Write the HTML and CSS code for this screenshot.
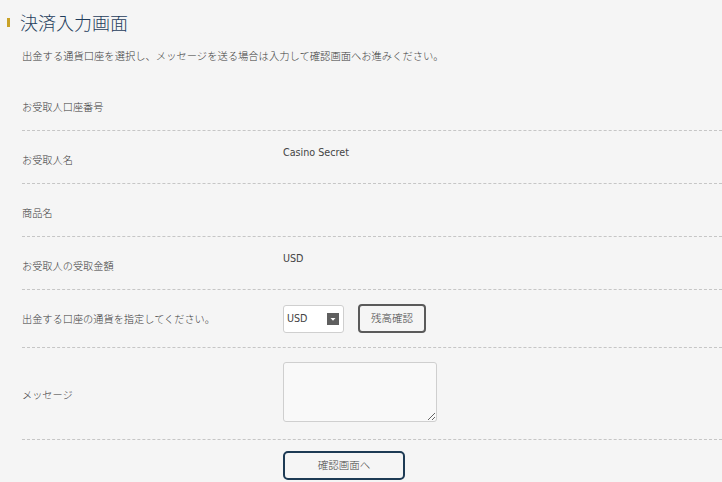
FILE: index.html
```html
<!DOCTYPE html>
<html lang="ja">
<head>
<meta charset="utf-8">
<title>決済入力画面</title>
<link rel="stylesheet" href="styles.css">
</head>
<body>
<div class="page">
  <div class="title">
    <span class="title-bar"></span>
    <h1 class="title-text">決済入力画面</h1>
  </div>
  <p class="desc">出金する通貨口座を選択し、メッセージを送る場合は入力して確認画面へお進みください。</p>
  <div class="form">
    <div class="row row-text">
      <div class="label">お受取人口座番号</div>
      <div class="value"></div>
    </div>
    <div class="row row-text">
      <div class="label">お受取人名</div>
      <div class="value latin">Casino Secret</div>
    </div>
    <div class="row row-text">
      <div class="label">商品名</div>
      <div class="value"></div>
    </div>
    <div class="row row-text">
      <div class="label">お受取人の受取金額</div>
      <div class="value latin">USD</div>
    </div>
    <div class="row row-control row-select">
      <div class="label">出金する口座の通貨を指定してください。</div>
      <div class="controls">
        <div class="select">
          <span class="select-text latin">USD</span>
          <span class="select-arrow"><svg width="12" height="12" viewBox="0 0 12 12"><rect width="12" height="12" fill="#5f5f5f"/><path d="M3.5 5 L8.5 5 L6 7.8 Z" fill="#fff"/></svg></span>
        </div>
        <button class="btn btn-gray" type="button">残高確認</button>
      </div>
    </div>
    <div class="row row-control row-message">
      <div class="label">メッセージ</div>
      <div class="controls">
        <textarea class="textarea"></textarea>
      </div>
    </div>
    <div class="submit-row">
      <button class="btn btn-navy" type="button">確認画面へ</button>
    </div>
  </div>
</div>
</body>
</html>
```

FILE: styles.css
```css
html, body {
  margin: 0;
  padding: 0;
  background: #f5f5f5;
}

body {
  font-family: "Noto Sans CJK JP", sans-serif;
  font-weight: 300;
  color: #3a3a3a;
  font-size: 10.2px;
}

.page {
  overflow: hidden;
  height: 482px;
}

.title {
  display: flex;
  align-items: center;
  gap: 10px;
  padding: 10px 0 0 7px;
  height: 24px;
}

.title-bar {
  display: block;
  width: 3px;
  height: 9px;
  background: #c9a227;
}

.title-text {
  margin: 0;
  font-size: 18px;
  font-weight: 300;
  line-height: 24px;
  color: #1f3d5c;
}

.desc {
  margin: 15px 0 0 22px;
  font-size: 10.3px;
  line-height: 14px;
}

.form {
  margin: 15px 0 0 22px;
}

.row {
  display: grid;
  grid-template-columns: 261px 1fr;
  border-bottom: 1px dashed #c6c6c6;
}

.row-text {
  height: 52px;
}

.row-text .label {
  padding-top: 22px;
  line-height: 14px;
}

.row-text .value {
  padding-top: 15px;
  line-height: 14px;
}

.latin {
  font-family: "DejaVu Sans", "Noto Sans CJK JP", sans-serif;
  font-weight: 400;
  font-size: 9.6px;
  color: #444;
}

.row-control {
  align-items: center;
  line-height: 14px;
}

.row-select {
  padding: 14px 0 14px;
}

.row-message {
  padding: 14px 0 17px;
}

.row-message .label {
  padding-top: 6px;
}

.controls {
  display: flex;
  align-items: center;
  gap: 14px;
}

.select {
  box-sizing: border-box;
  width: 61px;
  height: 28px;
  background: #fff;
  border: 1px solid #cfcfcf;
  border-radius: 3px;
  display: flex;
  align-items: center;
  justify-content: space-between;
  padding: 0 4px 0 3px;
}

.select-arrow {
  display: flex;
}

.btn {
  box-sizing: border-box;
  font-family: "Noto Sans CJK JP", sans-serif;
  font-weight: 300;
  font-size: 10.5px;
  color: #444;
  background: #f5f5f5;
  height: 29px;
  padding: 0;
  line-height: 1;
}

.btn-gray {
  width: 68px;
  border: 2px solid #5a5a5a;
  border-radius: 4px;
}

.btn-navy {
  width: 122px;
  border: 2px solid #1d3a54;
  border-radius: 5px;
}

.textarea {
  box-sizing: border-box;
  display: block;
  width: 154px;
  height: 60px;
  margin: 0;
  border: 1px solid #cfcfcf;
  border-radius: 3px;
  background: #f9f9f9;
  resize: both;
}

.submit-row {
  padding: 11px 0 0 261px;
}
```
